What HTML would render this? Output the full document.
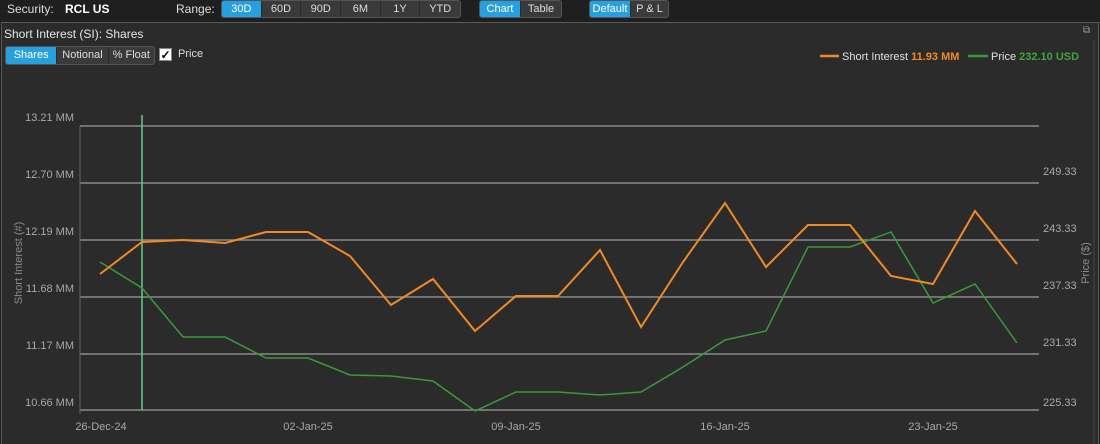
<!DOCTYPE html>
<html><head><meta charset="utf-8"><style>
*{margin:0;padding:0;box-sizing:border-box}
body{width:1100px;height:444px;background:#1f1f1f;font-family:"Liberation Sans",sans-serif;color:#ddd;overflow:hidden;position:relative;font-size:11px}
.t{position:absolute;white-space:nowrap}
.grp{position:absolute;top:0;height:18px;display:flex;border:1px solid #555;border-radius:3px;overflow:hidden;background:#3a3a3a}
.grp div{height:100%;line-height:16px;text-align:center;color:#ddd;font-size:11px;border-right:1px solid #2a2a2a}
.grp div.on{background:#27a0e0;color:#fff}
.panel{position:absolute;left:1px;top:22px;width:1098px;height:422px;background:#2b2b2b;border:1px solid #5a5a5a;border-bottom:none}
</style></head><body>
<div class="t" style="left:7px;top:2px;font-size:12px;color:#ddd">Security:</div>
<div class="t" style="left:65px;top:2px;font-size:12px;color:#fff;font-weight:bold">RCL US</div>
<div class="t" style="left:176px;top:2px;font-size:12px;color:#ddd">Range:</div>
<div class="grp" style="left:221px;width:240px">
<div class="on" style="width:40px">30D</div><div style="width:40px">60D</div><div style="width:40px">90D</div><div style="width:40px">6M</div><div style="width:40px">1Y</div><div style="width:40px;border:none">YTD</div></div>
<div class="grp" style="left:479px;width:83px"><div class="on" style="width:42px">Chart</div><div style="width:41px;border:none">Table</div></div>
<div class="grp" style="left:589px;width:80px"><div class="on" style="width:42px">Default</div><div style="width:38px;border:none">P &amp; L</div></div>
<div class="panel"></div>
<div class="t" style="left:4px;top:27px;font-size:12px;color:#e6e6e6">Short Interest (SI): Shares</div>
<div class="grp" style="left:5px;top:46px;width:150px;height:19px">
<div class="on" style="width:52px;line-height:17px">Shares</div><div style="width:52px;line-height:17px">Notional</div><div style="width:46px;border:none;line-height:17px">% Float</div></div>
<div style="position:absolute;left:159px;top:48px;width:13px;height:13px;background:#fff;border:1px solid #888;color:#000;font-size:12px;line-height:12px;text-align:center;font-weight:bold">✓</div>
<div class="t" style="left:178px;top:48px;color:#ddd">Price</div>
<div class="t" style="left:1083px;top:25px;color:#999;font-size:10px">⧉</div>
<svg width="1100" height="444" style="position:absolute;left:0;top:0" font-family="Liberation Sans, sans-serif">
<line x1="820" y1="56" x2="839" y2="56" stroke="#f08a24" stroke-width="2.5"/>
<text x="842" y="60" font-size="11" fill="#e0e0e0">Short Interest <tspan fill="#f08a24" font-weight="bold">11.93 MM</tspan></text>
<line x1="968" y1="56" x2="988" y2="56" stroke="#3a9a3a" stroke-width="2.5"/>
<text x="991" y="60" font-size="11" fill="#e0e0e0">Price <tspan fill="#3fa43f" font-weight="bold">232.10 USD</tspan></text>
<g stroke="#8a8a8a" stroke-width="1.5">
<line x1="80" y1="126" x2="1039" y2="126"/><line x1="80" y1="183" x2="1039" y2="183"/><line x1="80" y1="240" x2="1039" y2="240"/><line x1="80" y1="297" x2="1039" y2="297"/><line x1="80" y1="354" x2="1039" y2="354"/><line x1="80" y1="410" x2="1039" y2="410"/>
</g>
<line x1="80" y1="126" x2="80" y2="414" stroke="#666" stroke-width="1"/>
<g font-size="11" fill="#a8a8a8" text-anchor="end">
<text x="74" y="121">13.21 MM</text><text x="74" y="178">12.70 MM</text><text x="74" y="235">12.19 MM</text><text x="74" y="292">11.68 MM</text><text x="74" y="349">11.17 MM</text><text x="74" y="406">10.66 MM</text>
</g>
<g font-size="11" fill="#a8a8a8">
<text x="1043" y="175">249.33</text><text x="1043" y="232">243.33</text><text x="1043" y="289">237.33</text><text x="1043" y="346">231.33</text><text x="1043" y="406">225.33</text>
</g>
<text transform="translate(22,263) rotate(-90)" font-size="11" fill="#8a8a8a" text-anchor="middle">Short Interest (#)</text>
<text transform="translate(1089,263) rotate(-90)" font-size="11" fill="#8a8a8a" text-anchor="middle">Price ($)</text>
<g font-size="11" fill="#a8a8a8" text-anchor="middle">
<text x="101" y="430">26-Dec-24</text><text x="308" y="430">02-Jan-25</text><text x="516" y="430">09-Jan-25</text><text x="725" y="430">16-Jan-25</text><text x="933" y="430">23-Jan-25</text>
</g>
<line x1="142" y1="115" x2="142" y2="410" stroke="#5fcf8a" stroke-width="1.5"/>
<polyline fill="none" stroke="#3a9a3a" stroke-width="1.5" points="100,262 142,288 183,337 225,337 266,358 308,358 350,375 391,376 433,381 475,411 516,392 558,392 600,395 641,392 683,367 725,340 766,331 808,247 850,247 891,232 933,303 975,284 1017,343"/>
<polyline fill="none" stroke="#f08a24" stroke-width="2" points="100,274 142,242 183,240 225,243 266,232 308,232 350,256 391,305 433,279 475,331 516,296 558,296 600,250 641,327 683,262 725,203 766,267 808,225 850,225 891,276 933,284 975,211 1017,264"/>
<line x1="1094" y1="40" x2="1094" y2="444" stroke="#444" stroke-width="1"/>
</svg>
</body></html>
